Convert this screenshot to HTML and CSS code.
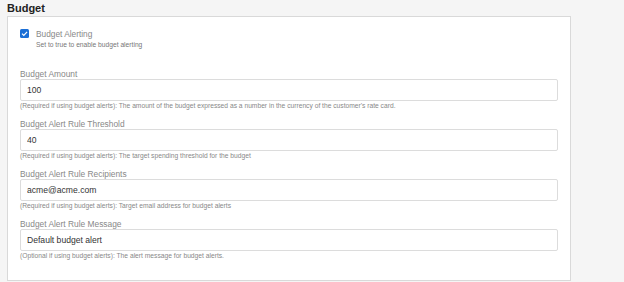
FILE: index.html
```html
<!DOCTYPE html>
<html lang="en">
<head>
    <meta charset="UTF-8">
    <meta name="viewport" content="width=device-width, initial-scale=1.0">
    <title>Budget</title>
    <link rel="stylesheet" href="styles.css">
</head>
<body>
    <h2 class="section-title">Budget</h2>
    <div class="panel">
        <label class="check-row">
            <span class="checkbox">
                <svg viewBox="0 0 10 10" width="9" height="9">
                    <path d="M2.2 5.2 L4.2 7.1 L7.9 3.1" fill="none" stroke="white" stroke-width="1.3"></path>
                </svg>
            </span>
            <span class="check-text">
                <span class="check-label">Budget Alerting</span>
                <span class="check-help">Set to true to enable budget alerting</span>
            </span>
        </label>

        <div class="field">
            <div class="field-label">Budget Amount</div>
            <input class="field-input" type="text" value="100">
            <div class="field-help">(Required if using budget alerts): The amount of the budget expressed as a number in the currency of the customer's rate card.</div>
        </div>
        <div class="field">
            <div class="field-label">Budget Alert Rule Threshold</div>
            <input class="field-input" type="text" value="40">
            <div class="field-help">(Required if using budget alerts): The target spending threshold for the budget</div>
        </div>
        <div class="field">
            <div class="field-label">Budget Alert Rule Recipients</div>
            <input class="field-input" type="text" value="acme@acme.com">
            <div class="field-help">(Required if using budget alerts): Target email address for budget alerts</div>
        </div>
        <div class="field">
            <div class="field-label">Budget Alert Rule Message</div>
            <input class="field-input" type="text" value="Default budget alert">
            <div class="field-help">(Optional if using budget alerts): The alert message for budget alerts.</div>
        </div>
    </div>
</body>
</html>
```

FILE: styles.css
```css
/* General */
body {
    margin: 0;
    padding-left: 7px;
    font-family: "Liberation Sans", Arial, sans-serif;
    background-color: #f5f5f5;
}

.section-title {
    margin: 0;
    height: 16px;
    font-size: 11px;
    line-height: 17px;
    font-weight: bold;
    color: #222;
}

.panel {
    width: 538px;
    padding: 12px 12px 19px 12px;
    background-color: white;
    border: 1px solid #d9d9d9;
}

/* Checkbox row */
.check-row {
    display: flex;
    align-items: flex-start;
    gap: 7px;
    margin-bottom: 19px;
}

.checkbox {
    display: flex;
    width: 9px;
    height: 9px;
    border-radius: 1.5px;
    background-color: #1b6fd6;
}

.check-text {
    display: flex;
    flex-direction: column;
    margin-top: -1px;
}

.check-label {
    font-size: 8.3px;
    line-height: 12px;
    color: #888;
}

.check-help {
    font-size: 6.7px;
    line-height: 10px;
    color: #777;
}

/* Fields */
.field {
    margin-bottom: 8px;
}

.field:last-child {
    margin-bottom: 0;
}

.field-label {
    font-size: 8.4px;
    line-height: 10px;
    color: #888;
}

.field-input {
    display: block;
    box-sizing: border-box;
    width: 100%;
    height: 22px;
    margin: 0;
    padding: 0 6px;
    border: 1px solid #dcdcdc;
    border-radius: 2px;
    font-family: inherit;
    font-size: 8.6px;
    color: #333;
    background-color: white;
}

.field-help {
    font-size: 6.7px;
    line-height: 10px;
    color: #888;
    white-space: nowrap;
}
```
